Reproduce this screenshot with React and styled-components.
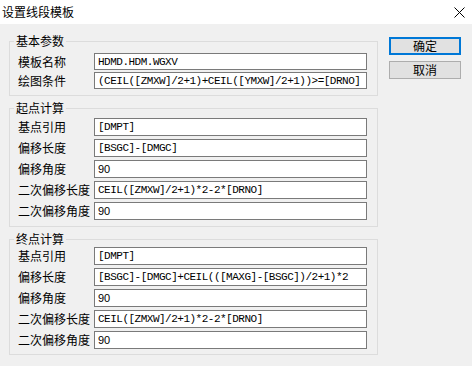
import React from 'react';
import styled, { createGlobalStyle } from 'styled-components';

const GlobalStyle = createGlobalStyle`
  html, body {
    margin: 0;
    padding: 0;
    background: #f0f0f0;
  }
  body {
    font-family: "Noto Sans CJK SC", "Noto Sans", sans-serif;
    font-size: 12px;
    color: #000;
  }
`;

const Window = styled.div`
  width: 472px;
  height: 366px;
  background: #f0f0f0;
  display: flex;
  flex-direction: column;
  overflow: hidden;
`;

const TitleBar = styled.div`
  height: 24px;
  flex-shrink: 0;
  background: #fff;
  display: flex;
  align-items: center;
  justify-content: space-between;
  padding: 0 7px 0 2px;
`;

const Title = styled.span`
  font-size: 12px;
  line-height: 24px;
`;

const CloseButton = styled.button`
  border: 0;
  background: transparent;
  padding: 0;
  width: 12px;
  height: 12px;
  display: flex;
  align-items: center;
  justify-content: center;
`;

const Body = styled.div`
  display: flex;
  gap: 11px;
  padding: 10px 0 0 9px;
`;

const Groups = styled.div`
  width: 369px;
  display: flex;
  flex-direction: column;
  gap: 5px;
`;

const Group = styled.fieldset`
  box-sizing: border-box;
  width: 369px;
  min-width: 0;
  margin: 0;
  border: 1px solid #dcdcdc;
  padding: ${p => p.$top}px 10px ${p => p.$bottom}px 8px;
`;

const Legend = styled.legend`
  font-size: 12px;
  line-height: 14px;
  padding: 0 2px;
  margin-left: -4px;
`;

const Rows = styled.div`
  display: flex;
  flex-direction: column;
  gap: ${p => p.$gap}px;
`;

const Row = styled.div`
  display: grid;
  grid-template-columns: 76px 273px;
  align-items: center;
  height: ${p => p.$height}px;
`;

const Label = styled.span`
  font-size: 12px;
  line-height: 14px;
  white-space: nowrap;
`;

const Field = styled.input`
  box-sizing: border-box;
  width: 273px;
  height: ${p => p.$height}px;
  margin: 0;
  border: 1px solid #7a7a7a;
  border-radius: 0;
  background: #fff;
  padding: 0 3px;
  color: #000;
  outline: none;
  font-family: ${p => (p.$plain ? '"Liberation Sans", Arial, sans-serif' : '"Liberation Mono", "Courier New", monospace')};
  font-size: ${p => (p.$plain ? '11px' : '11px')};
  letter-spacing: ${p => (p.$plain ? '0' : '-0.5px')};
`;

const Actions = styled.div`
  width: 72px;
  padding-top: 3px;
  display: flex;
  flex-direction: column;
  gap: 6px;
`;

const Button = styled.button`
  box-sizing: border-box;
  width: 72px;
  height: 18px;
  margin: 0;
  padding: 0;
  background: #e1e1e1;
  border: ${p => (p.$primary ? '2px solid #0078d7' : '1px solid #adadad')};
  font-family: "Noto Sans CJK SC", sans-serif;
  font-size: 12px;
  line-height: 14px;
  color: #000;
`;

const groups = [
  {
    title: '基本参数',
    top: 5,
    bottom: 6,
    gap: 2,
    height: 17,
    rows: [
      ['模板名称', 'HDMD.HDM.WGXV'],
      ['绘图条件', '(CEIL([ZMXW]/2+1)+CEIL([YMXW]/2+1))>=[DRNO]'],
    ],
  },
  {
    title: '起点计算',
    top: 3,
    bottom: 6,
    gap: 3,
    height: 18,
    rows: [
      ['基点引用', '[DMPT]'],
      ['偏移长度', '[BSGC]-[DMGC]'],
      ['偏移角度', '90'],
      ['二次偏移长度', 'CEIL([ZMXW]/2+1)*2-2*[DRNO]'],
      ['二次偏移角度', '90'],
    ],
  },
  {
    title: '终点计算',
    top: 1,
    bottom: 5,
    gap: 3,
    height: 18,
    rows: [
      ['基点引用', '[DMPT]'],
      ['偏移长度', '[BSGC]-[DMGC]+CEIL(([MAXG]-[BSGC])/2+1)*2'],
      ['偏移角度', '90'],
      ['二次偏移长度', 'CEIL([ZMXW]/2+1)*2-2*[DRNO]'],
      ['二次偏移角度', '90'],
    ],
  },
];

const App = () => {
  return (
    <Window>
      <GlobalStyle />
      <TitleBar>
        <Title>设置线段模板</Title>
        <CloseButton aria-label="close">
          <svg width="11" height="11" viewBox="0 0 11 11">
            <path d="M0.5 0.5 L10.5 10.5 M10.5 0.5 L0.5 10.5" stroke="#000" strokeWidth="1" fill="none" />
          </svg>
        </CloseButton>
      </TitleBar>
      <Body>
        <Groups>
          {groups.map(group => (
            <Group key={group.title} $top={group.top} $bottom={group.bottom}>
              <Legend>{group.title}</Legend>
              <Rows $gap={group.gap}>
                {group.rows.map(([label, value]) => (
                  <Row key={label} $height={group.height}>
                    <Label>{label}</Label>
                    <Field
                      readOnly
                      value={value}
                      $height={group.height}
                      $plain={/^\d+$/.test(value)}
                    />
                  </Row>
                ))}
              </Rows>
            </Group>
          ))}
        </Groups>
        <Actions>
          <Button $primary>确定</Button>
          <Button>取消</Button>
        </Actions>
      </Body>
    </Window>
  );
};

export default App;
